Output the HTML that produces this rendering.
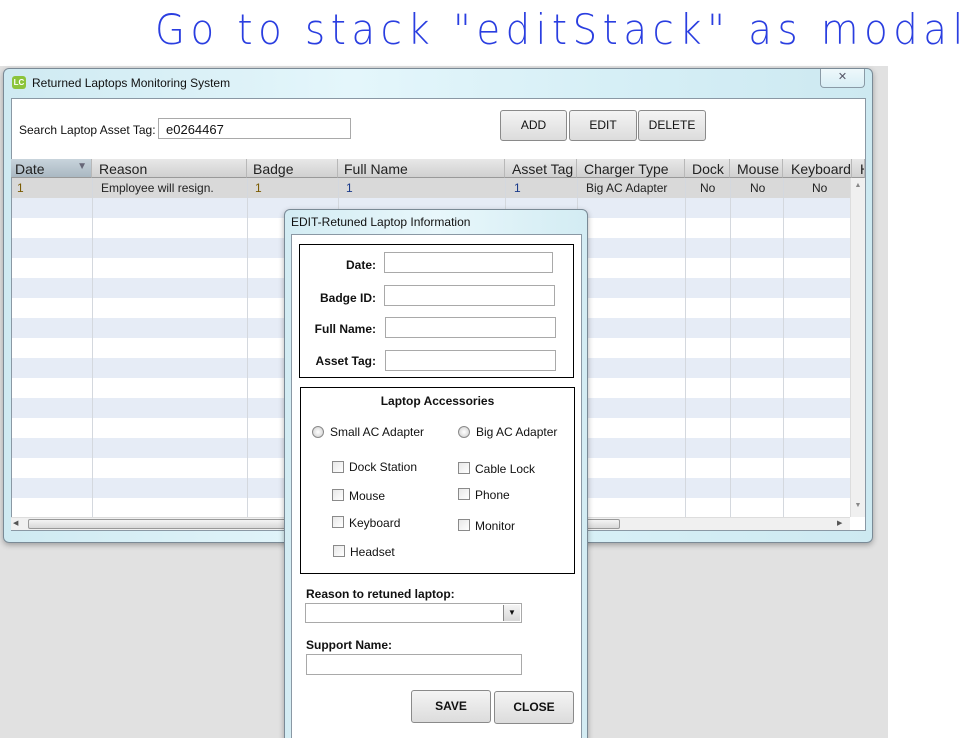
<!DOCTYPE html>
<html style="width:962px;height:738px;overflow:hidden"><head><style>
*{box-sizing:border-box;margin:0;padding:0}
body{width:962px;height:738px;position:relative;overflow:hidden;background:#fff;font-family:"Liberation Sans",sans-serif;font-size:12px;color:#111}
.a{position:absolute}
.bg{left:0;top:66px;width:888px;height:672px;background:#e1e1e1}
.win{left:3px;top:68px;width:870px;height:475px;border:1px solid #7a8a96;border-radius:6px;background:linear-gradient(90deg,#cfeaf2,#e4f6fb 40%,#d6eff6 70%,#cde9f1);box-shadow:0 2px 6px rgba(0,0,0,.3)}
.inner{left:7px;top:29px;width:855px;height:433px;background:#fff;border:1px solid #8a98a4}
.inp{background:#fff;border:1px solid #a9a9a9}
.btn{border:1px solid #8a8a8a;border-radius:3px;background:linear-gradient(#f4f4f4,#dcdcdc);text-align:center;font-size:12px}
.hd{top:159px;height:19px;background:linear-gradient(#e8e8e8,#d0d0d0);border-right:1px solid #b8b8b8;border-bottom:1px solid #999;font-size:14px;padding:2px 4px;color:#222;white-space:nowrap;overflow:hidden}
.row{left:12px;width:838px;height:20px}
.vl{top:178px;height:339px;width:1px;background:#d4d8de}
.cell{top:181px;font-size:12px;color:#222}
.modal{left:284px;top:209px;width:304px;height:540px;border:1px solid #7a8a96;border-radius:6px;background:linear-gradient(90deg,#d3ecf3,#e8f7fb 50%,#d3ecf3);box-shadow:0 2px 6px rgba(0,0,0,.3)}
.box{border:1px solid #000;background:#fff}
.lb{font-weight:bold;font-size:12px;text-align:right}
.cb{width:12px;height:12px;border:1px solid #8a8a8a;background:linear-gradient(135deg,#e8e8e8,#fff)}
.rd{width:12px;height:12px;border:1px solid #8a8a8a;border-radius:50%;background:radial-gradient(#fff,#ccc)}
</style></head><body>
<div class="a" style="left:155px;top:2px;font-family:'DejaVu Sans',sans-serif;font-size:42px;color:#2a3ee0;letter-spacing:6px;font-weight:200;white-space:nowrap;line-height:56px;transform:scaleX(0.92);transform-origin:left">Go to stack "editStack" as modal</div>
<div class="a bg"></div>
<div class="a win">
 <div class="a" style="left:8px;top:7px;width:14px;height:13px;background:#8cc43c;border-radius:3px;color:#fff;font-size:8px;font-weight:bold;text-align:center;line-height:13px">LC</div>
 <div class="a" style="left:28px;top:7px;font-size:12px">Returned Laptops Monitoring System</div>
 <div class="a" style="left:816px;top:0;width:45px;height:19px;border:1px solid #8a9aa6;border-top:none;border-radius:0 0 4px 4px;background:linear-gradient(#eef8fb,#d8eef5);text-align:center;font-size:11px;color:#556;line-height:17px">✕</div>
 <div class="a inner"></div>
</div>
<div class="a" style="left:19px;top:123px;font-size:12px">Search Laptop Asset Tag:</div>
<div class="a inp" style="left:158px;top:118px;width:193px;height:21px;padding:3px 7px;font-size:13px">e0264467</div>
<div class="a btn" style="left:500px;top:110px;width:67px;height:31px;line-height:29px">ADD</div>
<div class="a btn" style="left:569px;top:110px;width:68px;height:31px;line-height:29px">EDIT</div>
<div class="a btn" style="left:638px;top:110px;width:68px;height:31px;line-height:29px">DELETE</div>
<div class="a row" style="top:178px;background:#d9d9d9"></div>
<div class="a row" style="top:198px;background:#e6ecf6"></div>
<div class="a row" style="top:238px;background:#e6ecf6"></div>
<div class="a row" style="top:278px;background:#e6ecf6"></div>
<div class="a row" style="top:318px;background:#e6ecf6"></div>
<div class="a row" style="top:358px;background:#e6ecf6"></div>
<div class="a row" style="top:398px;background:#e6ecf6"></div>
<div class="a row" style="top:438px;background:#e6ecf6"></div>
<div class="a row" style="top:478px;background:#e6ecf6"></div>
<div class="a hd" style="left:11px;width:81px;background:linear-gradient(#c8d4dc,#aab8c2)">Date<span style="float:right;font-size:10px;color:#667">▼</span></div>
<div class="a hd" style="left:92px;width:155px;padding-left:7px">Reason</div>
<div class="a hd" style="left:247px;width:91px;padding-left:6px">Badge</div>
<div class="a hd" style="left:338px;width:167px;padding-left:6px">Full Name</div>
<div class="a hd" style="left:505px;width:72px;padding-left:7px">Asset Tag</div>
<div class="a hd" style="left:577px;width:108px;padding-left:7px">Charger Type</div>
<div class="a hd" style="left:685px;width:45px;padding-left:7px">Dock</div>
<div class="a hd" style="left:730px;width:53px;padding-left:7px">Mouse</div>
<div class="a hd" style="left:783px;width:69px;padding-left:8px">Keyboard</div>
<div class="a hd" style="left:852px;width:13px;padding-left:8px">H</div>
<div class="a vl" style="left:92px"></div><div class="a vl" style="left:247px"></div><div class="a vl" style="left:338px"></div><div class="a vl" style="left:505px"></div><div class="a vl" style="left:577px"></div><div class="a vl" style="left:685px"></div><div class="a vl" style="left:730px"></div><div class="a vl" style="left:783px"></div>
<div class="a cell" style="left:17px;color:#7a5a00">1</div>
<div class="a cell" style="left:101px">Employee will resign.</div>
<div class="a cell" style="left:255px;color:#7a5a00">1</div>
<div class="a cell" style="left:346px;color:#1a3a8a">1</div>
<div class="a cell" style="left:514px;color:#1a3a8a">1</div>
<div class="a cell" style="left:586px">Big AC Adapter</div>
<div class="a cell" style="left:700px">No</div>
<div class="a cell" style="left:750px">No</div>
<div class="a cell" style="left:812px">No</div>
<div class="a" style="left:850px;top:178px;width:15px;height:339px;background:#f0f0f0;border-left:1px solid #ddd;font-size:7px;color:#888;text-align:center"><div style="margin-top:4px">▲</div><div style="margin-top:313px">▼</div></div>
<div class="a" style="left:11px;top:517px;width:839px;height:13px;background:#f0f0f0;border-top:1px solid #ddd;font-size:7px;color:#555"><span class="a" style="left:2px;top:1px">◀</span><div class="a" style="left:17px;top:1px;width:592px;height:10px;border:1px solid #999;border-radius:2px;background:linear-gradient(#f4f4f4,#d8d8d8)"></div><span class="a" style="left:826px;top:1px">▶</span></div>

<div class="a modal">
 <div class="a" style="left:6px;top:5px;font-size:12px">EDIT-Retuned Laptop Information</div>
 <div class="a" style="left:6px;top:24px;width:291px;height:520px;background:#fff;border:1px solid #8a98a4"></div>
</div>
<div class="a box" style="left:299px;top:244px;width:275px;height:134px"></div>
<div class="a lb" style="left:300px;top:258px;width:76px">Date:</div>
<div class="a inp" style="left:384px;top:252px;width:169px;height:21px"></div>
<div class="a lb" style="left:300px;top:291px;width:76px">Badge ID:</div>
<div class="a inp" style="left:384px;top:285px;width:171px;height:21px"></div>
<div class="a lb" style="left:300px;top:322px;width:76px">Full Name:</div>
<div class="a inp" style="left:385px;top:317px;width:171px;height:21px"></div>
<div class="a lb" style="left:300px;top:354px;width:76px">Asset Tag:</div>
<div class="a inp" style="left:385px;top:350px;width:171px;height:21px"></div>
<div class="a box" style="left:300px;top:387px;width:275px;height:187px"></div>
<div class="a" style="left:300px;top:394px;width:275px;text-align:center;font-weight:bold">Laptop Accessories</div>
<div class="a rd" style="left:312px;top:426px"></div><div class="a" style="left:330px;top:425px">Small AC Adapter</div>
<div class="a rd" style="left:458px;top:426px"></div><div class="a" style="left:476px;top:425px">Big AC Adapter</div>
<div class="a cb" style="left:332px;top:461px"></div><div class="a" style="left:349px;top:460px">Dock Station</div>
<div class="a cb" style="left:458px;top:462px"></div><div class="a" style="left:475px;top:462px">Cable Lock</div>
<div class="a cb" style="left:332px;top:489px"></div><div class="a" style="left:349px;top:489px">Mouse</div>
<div class="a cb" style="left:458px;top:488px"></div><div class="a" style="left:475px;top:488px">Phone</div>
<div class="a cb" style="left:332px;top:516px"></div><div class="a" style="left:349px;top:516px">Keyboard</div>
<div class="a cb" style="left:458px;top:519px"></div><div class="a" style="left:475px;top:519px">Monitor</div>
<div class="a cb" style="left:333px;top:545px"></div><div class="a" style="left:350px;top:545px">Headset</div>
<div class="a lb" style="left:306px;top:587px;text-align:left">Reason to retuned laptop:</div>
<div class="a inp" style="left:305px;top:603px;width:217px;height:20px"><div class="a" style="right:1px;top:1px;width:17px;height:16px;border-left:1px solid #888;background:linear-gradient(#f4f4f4,#d8d8d8);font-size:8px;text-align:center;line-height:16px">▼</div></div>
<div class="a lb" style="left:306px;top:638px;text-align:left">Support Name:</div>
<div class="a inp" style="left:306px;top:654px;width:216px;height:21px"></div>
<div class="a btn" style="left:411px;top:690px;width:80px;height:33px;line-height:31px;font-weight:bold">SAVE</div>
<div class="a btn" style="left:494px;top:691px;width:80px;height:33px;line-height:31px;font-weight:bold">CLOSE</div>
</body></html>
